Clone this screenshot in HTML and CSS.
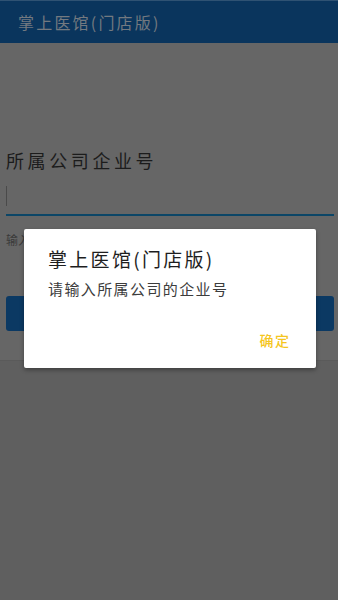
FILE: index.html
```html
<!DOCTYPE html>
<html lang="zh-CN">
<head>
<meta charset="utf-8">
<title>掌上医馆(门店版)</title>
<link rel="stylesheet" href="styles.css">
</head>
<body>
<div class="app">
  <header class="appbar">
    <h1 class="appbar-title">掌上医馆(门店版)</h1>
  </header>
  <main class="card">
    <div class="label">所属公司企业号</div>
    <div class="field"><span class="caret"></span></div>
    <div class="hint">输入企业号后点击登录</div>
    <button class="btn-primary" type="button"></button>
  </main>
  <div class="rest"></div>
</div>
<div class="dialog">
  <div class="dialog-title">掌上医馆(门店版)</div>
  <div class="dialog-msg">请输入所属公司的企业号</div>
  <div class="dialog-actions"><span class="dialog-btn">确定</span></div>
</div>
</body>
</html>
```
FILE: styles.css
```css
html, body {
  margin: 0;
  padding: 0;
}
body {
  width: 338px;
  height: 600px;
  overflow: hidden;
  position: relative;
  background: #5f5f5f;
  font-family: "Noto Sans CJK SC", "Noto Sans", sans-serif;
}
.app {
  display: flex;
  flex-direction: column;
  height: 600px;
}
.appbar {
  flex: none;
  height: 42px;
  border-top: 1px solid #2f5273;
  background: #0a355d;
  display: flex;
  align-items: center;
  padding-left: 18px;
}
.appbar-title {
  margin: 0;
  font-size: 16px;
  font-weight: normal;
  letter-spacing: 2.2px;
  color: #737980;
  line-height: 20px;
}
.card {
  flex: none;
  background: #666666;
  padding: 104px 4px 0 6px;
  height: 317px;
  box-sizing: border-box;
  display: flex;
  flex-direction: column;
}
.card > * {
  flex: none;
}
.label {
  font-size: 18px;
  line-height: 26px;
  letter-spacing: 3.6px;
  color: #1c1c1c;
}
.field {
  height: 43px;
  border-bottom: 2px solid #0c4667;
  display: flex;
  align-items: flex-end;
  padding-bottom: 8px;
  box-sizing: border-box;
}
.caret {
  width: 1px;
  height: 20px;
  background: #4a4a4a;
}
.hint {
  margin-top: 16px;
  font-size: 12px;
  line-height: 16px;
  color: #3a3a3a;
}
.btn-primary {
  margin-top: 48px;
  height: 35px;
  border: 0;
  border-radius: 3px;
  background: #0b3963;
  width: 100%;
}
.rest {
  flex: 1;
  background: #5f5f5f;
  border-top: 1px solid #5a5a5a;
}
.dialog {
  position: absolute;
  left: 24px;
  top: 229px;
  width: 292px;
  height: 139px;
  box-sizing: border-box;
  background: #ffffff;
  border-radius: 2px;
  box-shadow: 0 2px 4px rgba(0, 0, 0, 0.35);
  padding: 17px 27px 0 24px;
  display: flex;
  flex-direction: column;
}
.dialog-title {
  font-size: 19px;
  line-height: 26px;
  letter-spacing: 2.3px;
  color: #1e1e1e;
}
.dialog-msg {
  margin-top: 7px;
  font-size: 15px;
  line-height: 20px;
  letter-spacing: 1.4px;
  color: #3c3c3c;
}
.dialog-actions {
  margin-top: 31px;
  display: flex;
  justify-content: flex-end;
}
.dialog-btn {
  font-size: 14px;
  line-height: 20px;
  letter-spacing: 1.4px;
  margin-right: -1.4px;
  color: #f5c61f;
  font-weight: 500;
}
```
